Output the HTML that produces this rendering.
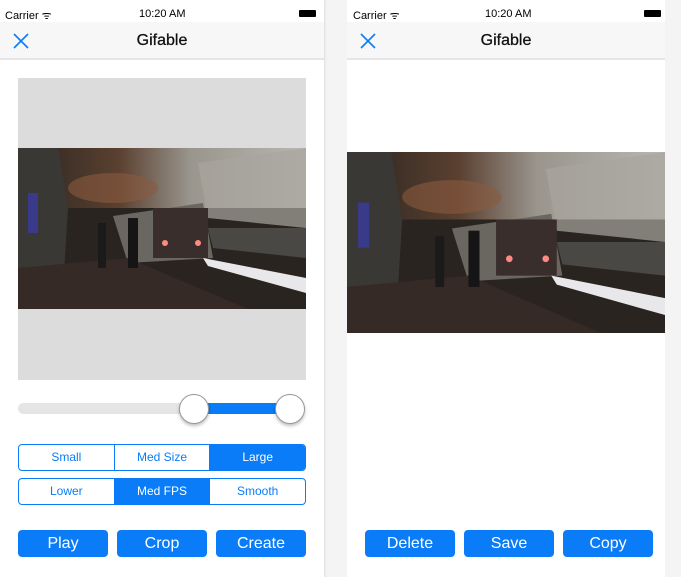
<!DOCTYPE html>
<html><head><style>
*{margin:0;padding:0;box-sizing:border-box}
body{width:681px;height:577px;background:#f4f4f4;font-family:"Liberation Sans",Arial,sans-serif;position:relative;overflow:hidden}
.scr{position:absolute;top:0;height:577px;background:#fff}
.sb{position:absolute;left:0;right:0;top:0;height:22px;background:#fff;font-size:11px}
.nav{position:absolute;left:0;right:0;top:22px;height:38px;background:#f7f7f7;border-bottom:2px solid #e6e6e6}
.nav .t{position:absolute;left:0;right:0;top:10px;text-align:center;font-size:16px;color:#111;-webkit-text-stroke:.3px #111}
.x{position:absolute;left:12px;top:10px}
.btn{position:absolute;height:27px;background:#0a7cf7;color:#fff;border-radius:4px;text-align:center;font-size:16px;line-height:27px}
.seg{position:absolute;left:18px;width:288px;height:27px;border:1px solid #0a7cf7;border-radius:4px;display:flex;overflow:hidden}
.seg div{flex:1;text-align:center;font-size:12px;line-height:25px;color:#0a7cf7;border-left:1px solid #0a7cf7}
.seg div:first-child{border-left:none}
.seg .on{background:#0a7cf7;color:#fff}
</style></head><body>
<svg width="0" height="0" style="position:absolute"><defs>
<linearGradient id="ceil" x1="0" y1="0" x2="1" y2="0"><stop offset="0" stop-color="#2a2520"/><stop offset=".35" stop-color="#5a4030"/><stop offset=".6" stop-color="#9a968e"/><stop offset="1" stop-color="#b8b6b0"/></linearGradient>
<symbol id="photo" viewBox="0 0 288 161" preserveAspectRatio="none">
<rect width="288" height="161" fill="#2a2420"/>
<rect width="288" height="60" fill="url(#ceil)"/>
<ellipse cx="95" cy="40" rx="45" ry="15" fill="#8a5a40" opacity=".6"/>
<path d="M180 15 L288 0 L288 80 L190 70Z" fill="#a8a59e" opacity=".7"/>
<path d="M0 0 L40 0 L50 60 L45 140 L0 161Z" fill="#3a3835"/>
<rect x="10" y="45" width="10" height="40" fill="#3a3a8a"/>
<path d="M95 68 L185 55 L195 110 L110 115Z" fill="#6a6660"/>
<rect x="135" y="60" width="55" height="50" fill="#3a2e2c"/>
<circle cx="147" cy="95" r="3" fill="#ff8a80"/><circle cx="180" cy="95" r="3" fill="#ff8a80"/>
<path d="M190 80 L288 80 L288 110 L195 100Z" fill="#4a4845"/>
<path d="M185 110 L288 130 L288 145 L190 118Z" fill="#e8e8ea"/>
<path d="M0 161 L0 120 L110 110 L230 161Z" fill="#352a25"/>
<rect x="110" y="70" width="10" height="50" fill="#151515"/>
<rect x="80" y="75" width="8" height="45" fill="#1a1a1a"/>
</symbol></defs></svg>

<div class="scr" style="left:0;width:324px;box-shadow:1px 0 2px #ddd">
 <div class="sb"><span style="position:absolute;left:5px;top:8px">Carrier ᯤ</span><span style="position:absolute;left:139px;top:8px">10:20 AM</span><span style="position:absolute;left:299px;top:10px;width:17px;height:7px;background:#000;border-radius:1px"></span></div>
 <div class="nav"><svg class="x" width="18" height="18"><path d="M2 2L16 16M16 2L2 16" stroke="#0a7cf7" stroke-width="1.6"/></svg><div class="t">Gifable</div></div>
 <div style="position:absolute;left:18px;top:78px;width:288px;height:302px;background:#dcdcdc"></div>
 <svg style="position:absolute;left:18px;top:148px" width="288" height="161"><use href="#photo" width="288" height="161"/></svg>
 <div style="position:absolute;left:18px;top:403px;width:180px;height:11px;background:#e5e5e5;border-radius:6px"></div>
 <div style="position:absolute;left:194px;top:403px;width:95px;height:11px;background:#0a7cf7"></div>
 <div style="position:absolute;left:179px;top:394px;width:30px;height:30px;border-radius:50%;background:#fff;border:1px solid #999;box-shadow:0 2px 3px rgba(0,0,0,.25)"></div>
 <div style="position:absolute;left:275px;top:394px;width:30px;height:30px;border-radius:50%;background:#fff;border:1px solid #999;box-shadow:0 2px 3px rgba(0,0,0,.25)"></div>
 <div class="seg" style="top:444px"><div>Small</div><div>Med Size</div><div class="on">Large</div></div>
 <div class="seg" style="top:478px"><div>Lower</div><div class="on">Med FPS</div><div>Smooth</div></div>
 <div class="btn" style="left:18px;top:530px;width:90px">Play</div>
 <div class="btn" style="left:117px;top:530px;width:90px">Crop</div>
 <div class="btn" style="left:216px;top:530px;width:90px">Create</div>
</div>

<div class="scr" style="left:347px;width:318px">
 <div class="sb"><span style="position:absolute;left:6px;top:8px">Carrier ᯤ</span><span style="position:absolute;left:138px;top:8px">10:20 AM</span><span style="position:absolute;left:297px;top:10px;width:17px;height:7px;background:#000;border-radius:1px"></span></div>
 <div class="nav"><svg class="x" width="18" height="18"><path d="M2 2L16 16M16 2L2 16" stroke="#0a7cf7" stroke-width="1.6"/></svg><div class="t">Gifable</div></div>
 <svg style="position:absolute;left:0;top:152px" width="318" height="181"><use href="#photo" width="318" height="181"/></svg>
 <div class="btn" style="left:18px;top:530px;width:90px">Delete</div>
 <div class="btn" style="left:117px;top:530px;width:90px">Save</div>
 <div class="btn" style="left:216px;top:530px;width:90px">Copy</div>
</div>
</body></html>
